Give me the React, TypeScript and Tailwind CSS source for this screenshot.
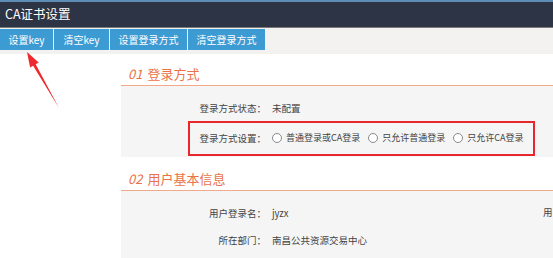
import React from "react";

const tabs = [
  { label: "设置key", w: "w-[53px]" },
  { label: "清空key", w: "w-[55px]" },
  { label: "设置登录方式", w: "w-[77px]" },
  { label: "清空登录方式", w: "w-[77px]" },
];

const radios = ["普通登录或CA登录", "只允许普通登录", "只允许CA登录"];

function Row({ label, children, h }: { label: string; children: React.ReactNode; h: string }) {
  return (
    <div className={`flex items-center ${h}`}>
      <div className="w-[145px] text-right text-[#444]">{label}</div>
      <div className="ml-[6px] flex items-center text-[#444]">{children}</div>
    </div>
  );
}

function SectionTitle({ num, title, h }: { num: string; title: string; h: string }) {
  return (
    <div className={`flex items-end ${h} border-b border-[#f1a98c] pb-[3px] pl-[7px] text-[13px] leading-[16px] text-[#ea7249]`}>
      <span className="italic mr-[5px]">{num}</span>
      <span>{title}</span>
    </div>
  );
}

export default function App() {
  return (
    <div
      className="relative w-[553px] h-[258px] overflow-hidden bg-white text-[9.5px]"
      style={{ fontFamily: '"Noto Sans CJK SC", "Noto Sans", sans-serif' }}
    >
      {/* header */}
      <div className="h-[2px] bg-[#5d8db5]" />
      <div className="h-[25px] bg-[#2c3446] flex items-center pl-[5px] text-[12.5px] text-white">
        CA证书设置
      </div>
      <div className="h-[1px] bg-[#7a7a7a]" />

      {/* tab bar */}
      <div className="h-[26px] bg-[#f3f2f0] pt-[1px]">
        <div className="flex gap-[1px]">
          {tabs.map((t) => (
            <div
              key={t.label}
              className={`${t.w} h-[21px] bg-[#3d9bd3] text-white text-[10px] flex items-center justify-center`}
            >
              {t.label}
            </div>
          ))}
        </div>
      </div>

      {/* content */}
      <div className="ml-[121px]">
        <SectionTitle num="01" title="登录方式" h="h-[32px]" />
        <div className="h-[71px] bg-[#f5f5f5] pt-[7px]">
          <Row label="登录方式状态：" h="h-[30px]">
            未配置
          </Row>
          <Row label="登录方式设置：" h="h-[30px]">
            {radios.map((r) => (
              <label key={r} className="flex items-center mr-[8px] text-[9px]">
                <span className="w-[10px] h-[10px] rounded-full border border-[#8a8a8a] bg-white mr-[4px]" />
                {r}
              </label>
            ))}
          </Row>
        </div>

        <SectionTitle num="02" title="用户基本信息" h="h-[34px]" />
        <div className="relative h-[80px] bg-[#f5f5f5] pt-[9px]">
          <Row label="用户登录名：" h="h-[27px]">
            jyzx
          </Row>
          <Row label="所在部门：" h="h-[27px]">
            南昌公共资源交易中心
          </Row>
          <div className="absolute left-[422px] top-[14px] whitespace-nowrap text-[#444]">用</div>
        </div>
      </div>

      {/* annotation: red box */}
      <div className="absolute left-[188px] top-[121px] w-[347px] h-[35px] border-2 border-[#e8262b]" />

      {/* annotation: red arrow */}
      <svg className="absolute left-0 top-0" width="80" height="120" viewBox="0 0 80 120">
        <polygon
          points="27,52 38.7,62.5 35.7,64.3 59,108 33.1,65.7 30.1,67.5"
          fill="#ef2a2e"
        />
      </svg>
    </div>
  );
}
